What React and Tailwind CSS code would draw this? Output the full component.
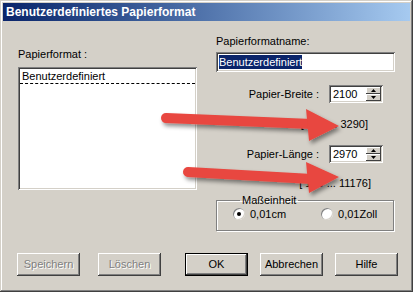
const raised =
  'shadow-[inset_-1px_-1px_0_#404040,inset_1px_1px_0_#ffffff,inset_-2px_-2px_0_#808080,inset_2px_2px_0_#d4d0c8]';
const sunken =
  'shadow-[inset_1px_1px_0_#808080,inset_-1px_-1px_0_#ffffff,inset_2px_2px_0_#404040,inset_-2px_-2px_0_#d4d0c8]';

function Triangle({ down }) {
  return (
    <svg width="5" height="3" viewBox="0 0 5 3">
      <path d={down ? 'M0 0H5L2.5 3Z' : 'M0 3H5L2.5 0Z'} fill="#000" />
    </svg>
  );
}

function SpinBox({ value }) {
  return (
    <div className={`flex h-[18px] w-[54px] bg-white p-[2px] ${sunken}`}>
      <div className="flex-1 pl-[2px] text-[11px] leading-[14px] text-black">{value}</div>
      <div className="flex w-[15px] flex-col">
        <div className={`flex h-[7px] items-center justify-center bg-[#d4d0c8] shadow-[inset_-1px_-1px_0_#404040,inset_1px_1px_0_#ffffff]`}>
          <Triangle />
        </div>
        <div className={`flex h-[7px] items-center justify-center bg-[#d4d0c8] shadow-[inset_-1px_-1px_0_#404040,inset_1px_1px_0_#ffffff]`}>
          <Triangle down />
        </div>
      </div>
    </div>
  );
}

function Radio({ checked, label }) {
  return (
    <div className="flex items-center gap-[5px]">
      <div className="flex h-[12px] w-[12px] items-center justify-center rounded-full bg-white shadow-[inset_1px_1px_0_#808080,inset_-1px_-1px_0_#d4d0c8]">
        {checked && <div className="h-[4px] w-[4px] rounded-full bg-black" />}
      </div>
      <span>{label}</span>
    </div>
  );
}

function Button({ children, disabled, primary, className = '' }) {
  return (
    <div
      className={`flex h-[23px] w-[63px] items-center justify-center bg-[#d4d0c8] ${raised} ${
        primary ? 'outline outline-1 outline-black outline-offset-[-1px] shadow-[inset_-2px_-2px_0_#404040,inset_2px_2px_0_#ffffff,inset_-3px_-3px_0_#808080]' : ''
      } ${disabled ? 'text-[#808080] [text-shadow:1px_1px_0_#ffffff]' : 'text-black'} ${className}`}
    >
      {children}
    </div>
  );
}

function Arrows() {
  return (
    <svg className="pointer-events-none absolute inset-0" width="413" height="292" viewBox="0 0 413 292">
      <defs>
        <filter id="sh" x="-10%" y="-30%" width="130%" height="180%">
          <feDropShadow dx="2" dy="3" stdDeviation="2" floodColor="#000" floodOpacity="0.45" />
        </filter>
      </defs>
      <g fill="#e8473f" stroke="#e8473f" filter="url(#sh)">
        <line x1="166" y1="118" x2="312" y2="124" strokeWidth="10" strokeLinecap="round" />
        <path d="M306 109L339 126L309 141Z" stroke="none" />
        <line x1="188" y1="172" x2="312" y2="179" strokeWidth="10" strokeLinecap="round" />
        <path d="M306 162L339 177L309 193Z" stroke="none" />
      </g>
    </svg>
  );
}

export default function App() {
  return (
    <div
      className="relative h-[292px] w-[413px] bg-[#d4d0c8] p-[3px] text-[11px] leading-[13px] text-black shadow-[inset_-1px_-1px_0_#404040,inset_1px_1px_0_#d4d0c8,inset_-2px_-2px_0_#808080,inset_2px_2px_0_#ffffff]"
      style={{ fontFamily: '"Liberation Sans", Arial, sans-serif' }}
    >
      <div className="flex h-[18px] items-center bg-linear-to-r from-[#0a246a] to-[#a6caf0] pl-[3px] text-[12px] font-bold text-white">
        Benutzerdefiniertes Papierformat
      </div>

      <div className="flex">
        <div className="ml-[15px] mt-[27px] w-[179px]">
          <div>Papierformat :</div>
          <div className={`mt-[6px] h-[123px] bg-white p-[2px] ${sunken}`}>
            <div className="h-[15px] border-b border-dashed border-black pl-[2px] pt-[1px] leading-[13px]">
              Benutzerdefiniert
            </div>
          </div>
        </div>

        <div className="ml-[19px] mt-[14px] w-[179px]">
          <div>Papierformatname:</div>
          <div className={`mt-[4px] flex h-[20px] items-center bg-white px-[3px] ${sunken}`}>
            <span className="bg-[#0a246a] leading-[14px] text-white">Benutzerdefiniert</span>
          </div>

          <div className="mt-[13px] flex items-center justify-end gap-[10px] pr-[12px]">
            <span>Papier-Breite :</span>
            <SpinBox value="2100" />
          </div>
          <div className="mt-[15px] pr-[27px] text-right">[ 100 ... 3290]</div>

          <div className="mt-[14px] flex items-center justify-end gap-[10px] pr-[12px]">
            <span>Papier-Länge :</span>
            <SpinBox value="2970" />
          </div>
          <div className="mt-[14px] pr-[24px] text-right">[ 100 ... 11176]</div>

          <fieldset className="mt-[4px] w-[178px] border border-[#808080] pb-[9px] pl-[16px] shadow-[1px_1px_0_#ffffff,inset_1px_1px_0_#ffffff]">
            <legend className="ml-[7px] px-[2px]">Maßeinheit</legend>
            <div className="flex h-[14px] items-center">
              <Radio checked label="0,01cm" />
              <div className="ml-[35px]">
                <Radio label="0,01Zoll" />
              </div>
            </div>
          </fieldset>
        </div>
      </div>

      <div className="ml-[14px] mt-[22px] flex">
        <Button disabled>Speichern</Button>
        <Button disabled className="ml-[18px]">Löschen</Button>
        <Button primary className="ml-[24px]">OK</Button>
        <Button className="ml-[12px]">Abbrechen</Button>
        <Button className="ml-[12px]">Hilfe</Button>
      </div>

      <Arrows />
    </div>
  );
}
